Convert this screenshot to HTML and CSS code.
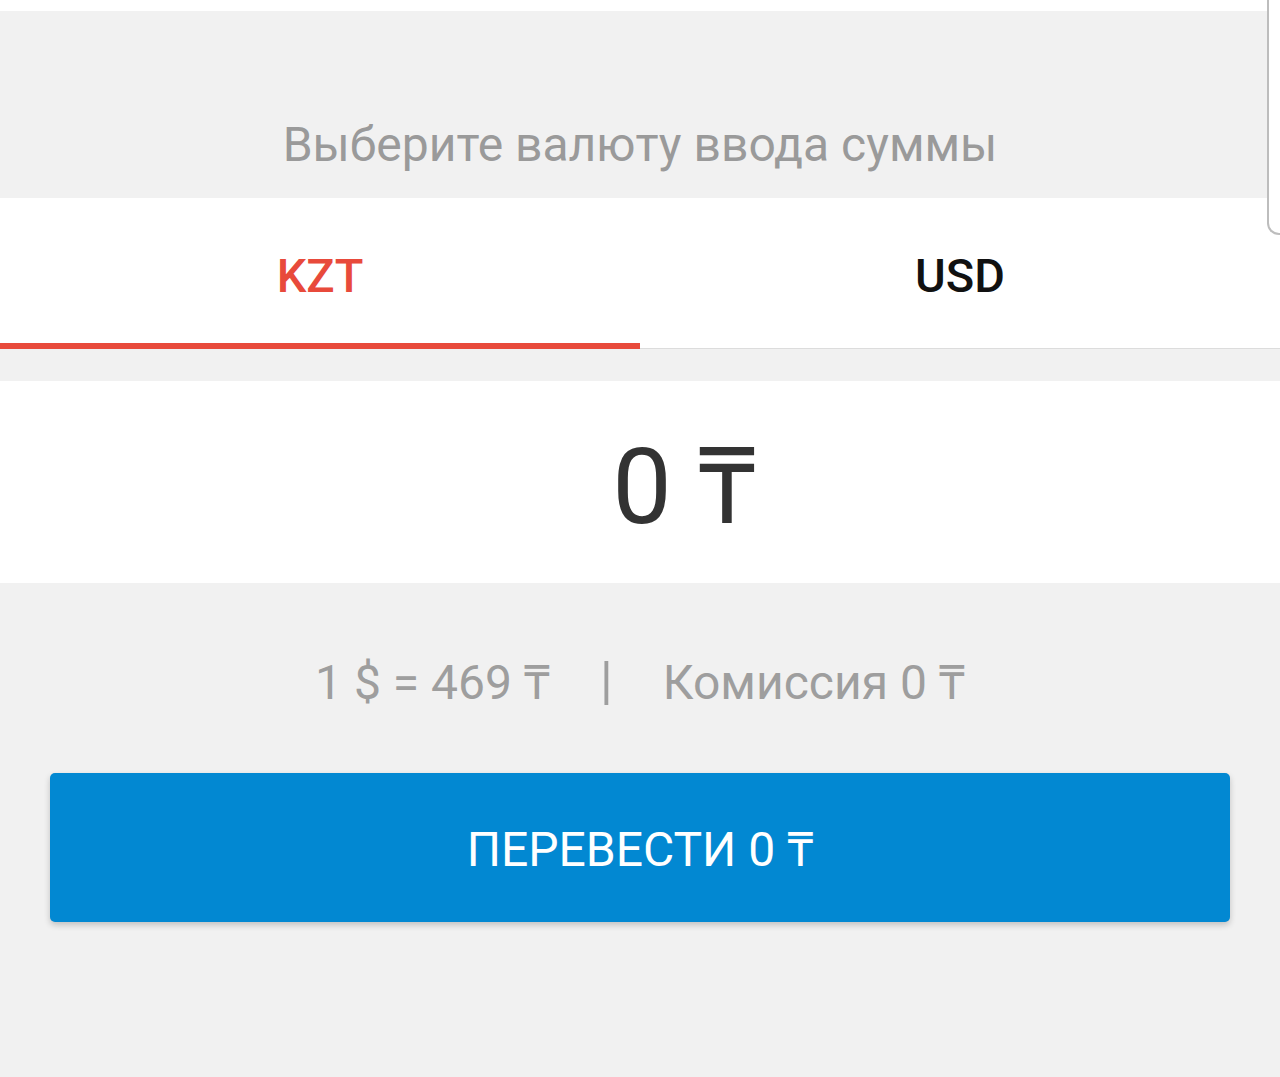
FILE: index.html
```html
<!DOCTYPE html>
<html lang="ru">
<head>
  <meta charset="UTF-8" />
  <meta name="viewport" content="width=device-width, initial-scale=1.0" />
  <title>Перевод</title>
  <link rel="stylesheet" href="styles.css">
</head>
<body>

  <div class="top-strip"></div>
  <div class="side-panel"></div>

  <div class="currency-title">Выберите валюту ввода суммы</div>

  <div class="tabs">
    <div class="tab active">KZT</div>
    <div class="tab">USD</div>
  </div>

  <div class="amount">0 ₸</div>

  <div class="info">
    <span>1 $ = 469 ₸</span>
    <span class="sep">|</span>
    <span>Комиссия 0 ₸</span>
  </div>

  <div class="actions">
    <button type="button" class="send-btn">ПЕРЕВЕСТИ 0 ₸</button>
  </div>

</body>
</html>
```

FILE: styles.css
```css
body {
  font-family: Roboto, "Noto Sans", "DejaVu Sans", sans-serif;
  background-color: #f1f1f1;
  margin: 0;
  padding: 0;
  height: 1077px;
  overflow: hidden;
}

.top-strip {
  height: 11px;
  background-color: #fff;
}

.side-panel {
  position: absolute;
  top: 0;
  right: 0;
  width: 11px;
  height: 233px;
  background-color: #fff;
  border-left: 2px solid #bdbdbd;
  border-bottom: 2px solid #bdbdbd;
  border-bottom-left-radius: 12px;
}

.currency-title {
  height: 187px;
  box-sizing: border-box;
  padding-top: 104px;
  line-height: 60px;
  text-align: center;
  font-size: 48px;
  color: #9a9a9a;
}

.tabs {
  display: flex;
  background-color: #fff;
  border-bottom: 1px solid #dcdcdc;
}

.tab {
  flex: 1;
  height: 151px;
  box-sizing: border-box;
  padding-top: 48px;
  line-height: 60px;
  text-align: center;
  font-size: 47px;
  font-weight: 500;
  color: #111;
  border-bottom: 6px solid transparent;
  margin-bottom: -1px;
}

.tab.active {
  color: #e84a3b;
  border-bottom-color: #e84a3b;
}

.amount {
  margin-top: 32px;
  height: 202px;
  background-color: #fff;
  display: flex;
  align-items: center;
  justify-content: center;
  padding-left: 88px;
  font-size: 106px;
  color: #333;
}

.info {
  height: 190px;
  box-sizing: border-box;
  padding-top: 4px;
  display: flex;
  align-items: center;
  justify-content: center;
  gap: 50px;
  font-size: 48px;
  color: #9e9e9e;
}

.info .sep {
  font-size: 52px;
}

.actions {
  padding: 0 50px;
}

.send-btn {
  width: 100%;
  height: 149px;
  background-color: #0288d2;
  color: #fff;
  border: none;
  border-radius: 5px;
  font-family: inherit;
  font-size: 48px;
  box-shadow: 0 3px 6px rgba(0, 0, 0, 0.2);
  cursor: pointer;
}
```
